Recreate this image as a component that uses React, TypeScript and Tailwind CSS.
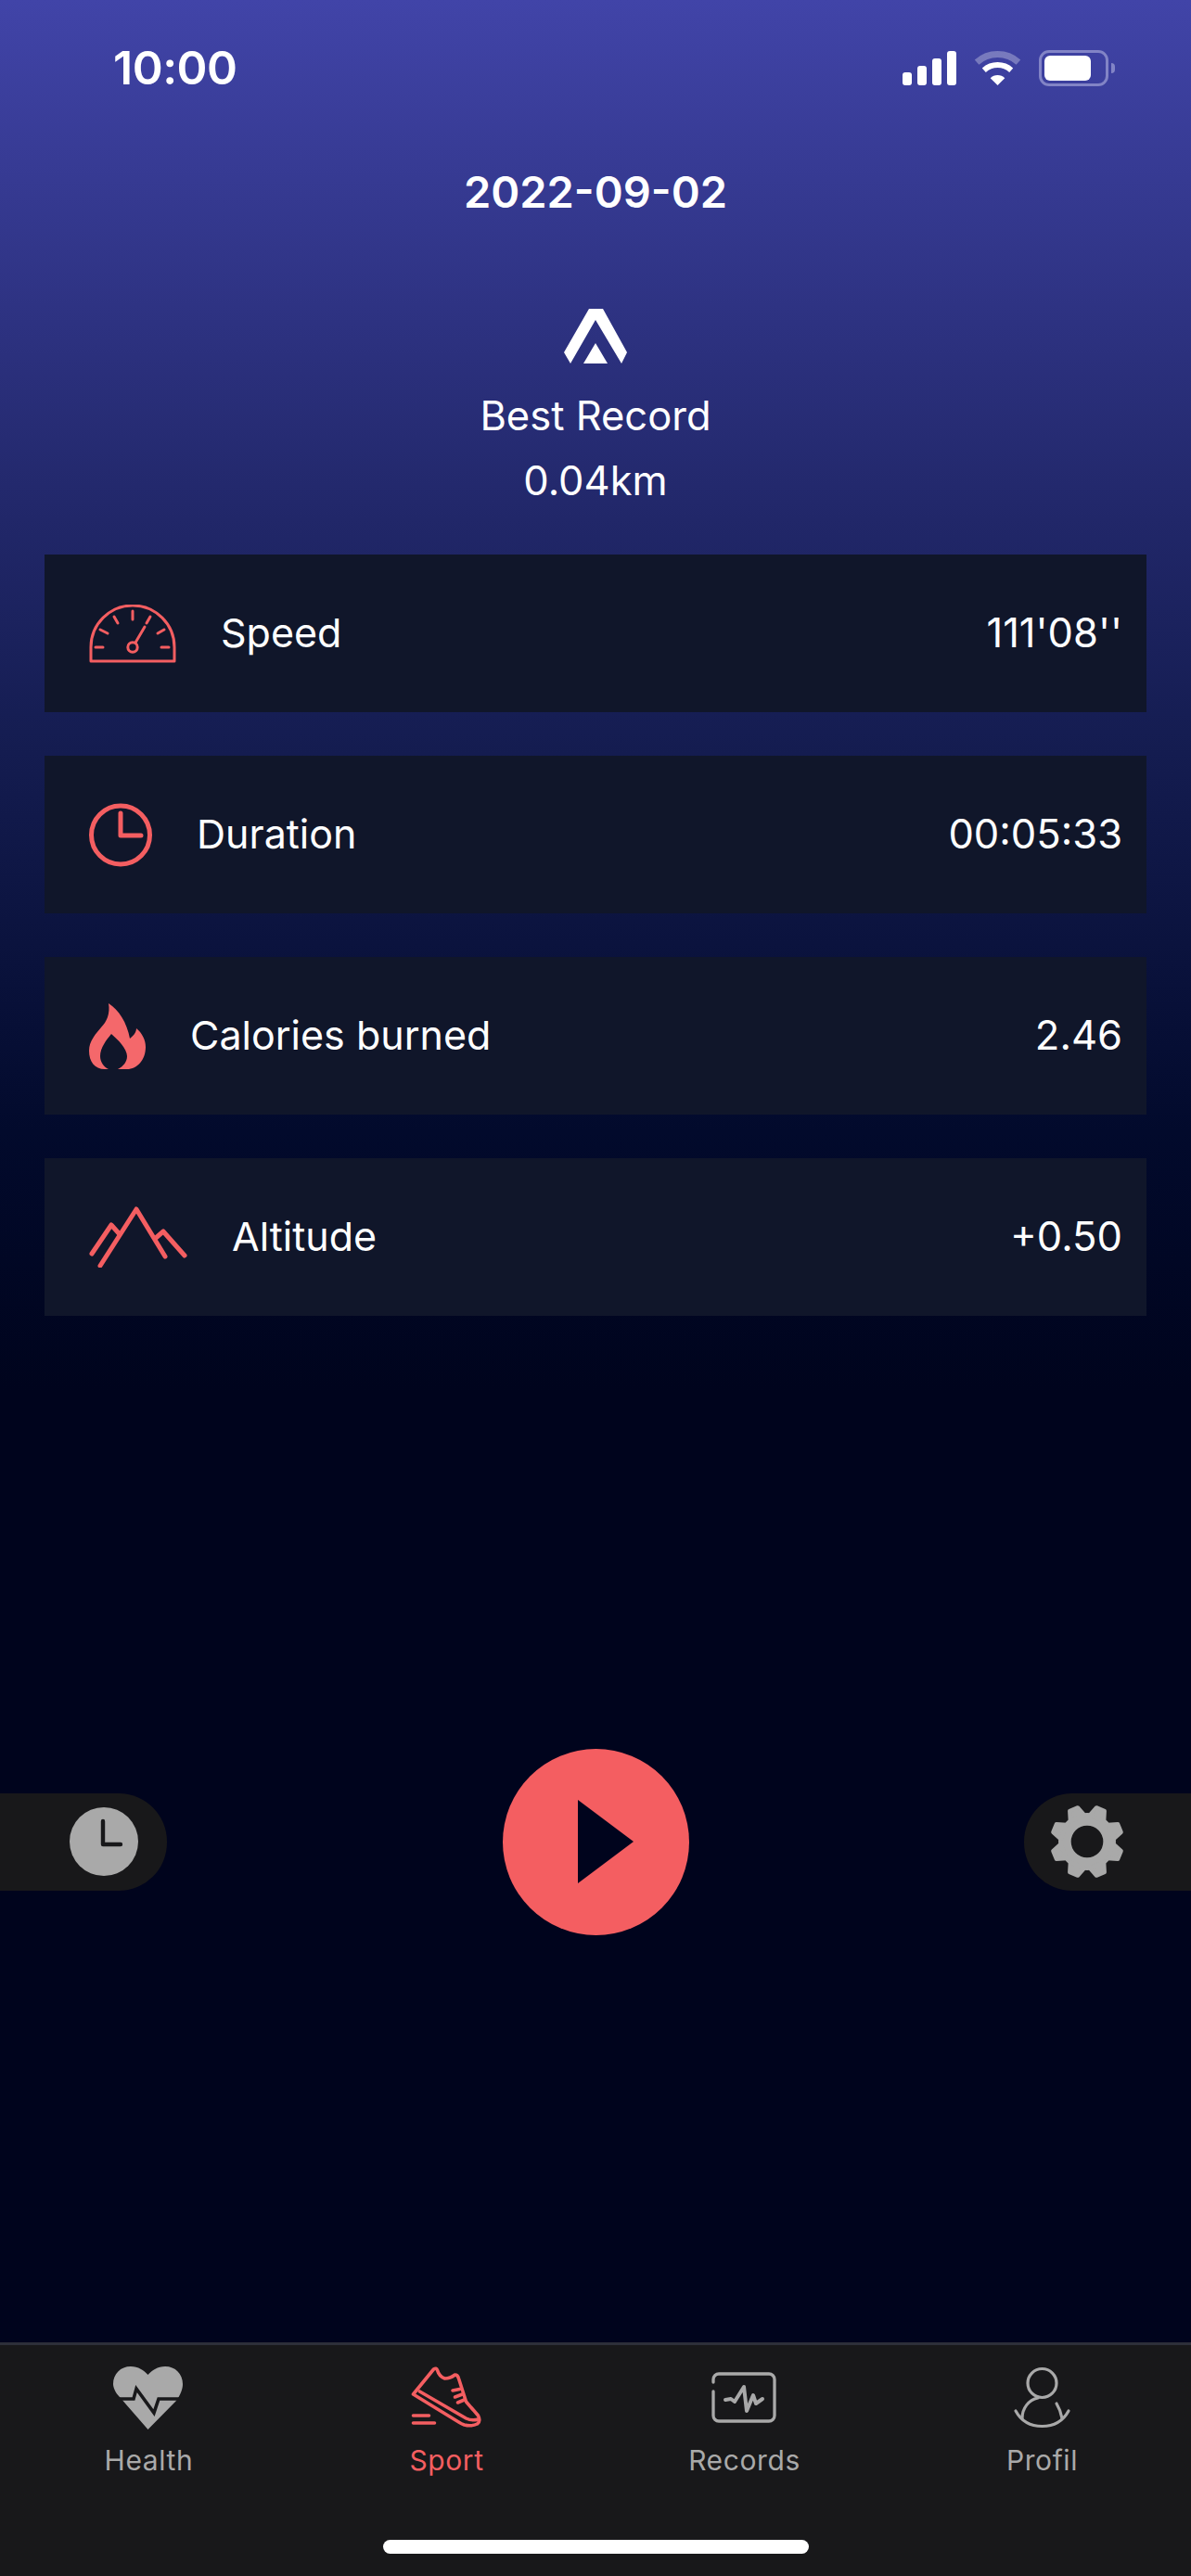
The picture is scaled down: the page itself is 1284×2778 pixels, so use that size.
import React from "react";

const coral = "#f45e61";
const gray = "#a9a9a9";

function Signal() {
  return (
    <div className="flex items-end gap-[6px] h-[37px]">
      <div className="w-[10px] h-[14px] rounded-[3px] bg-white" />
      <div className="w-[10px] h-[21px] rounded-[3px] bg-white" />
      <div className="w-[10px] h-[29px] rounded-[3px] bg-white" />
      <div className="w-[10px] h-[37px] rounded-[3px] bg-white" />
    </div>
  );
}

function Wifi() {
  return (
    <svg width="51" height="37" viewBox="0 0 51 37" fill="none">
      <path d="M3.1 12.1A33.5 33.5 0 0 1 47.9 12.1" stroke="#fff" strokeOpacity="0.3" strokeWidth="7" />
      <path d="M10.8 20.7A22 22 0 0 1 40.2 20.7" stroke="#fff" strokeWidth="6" />
      <path d="M25.5 37L17.7 29.3A11 11 0 0 1 33.3 29.3Z" fill="#fff" />
    </svg>
  );
}

function Battery() {
  return (
    <div className="flex items-center gap-[3px]">
      <div className="w-[75px] h-[39px] rounded-[11px] border-[3px] border-[#8284c6] p-[3px] pr-[16px]">
        <div className="w-full h-full rounded-[6px] bg-white" />
      </div>
      <div className="w-[4px] h-[11px] rounded-r-[4px] bg-[#8284c6]" />
    </div>
  );
}

function Logo() {
  return (
    <svg width="69" height="60" viewBox="0 0 69 60" fill="#fff">
      <path d="M27 0H42L68 47L62 59L34 12L7 59L0 47Z" />
      <path d="M34 37L47 59H21Z" />
    </svg>
  );
}

function Gauge() {
  return (
    <svg width="94" height="63" viewBox="0 0 94 63" fill="none" stroke={coral} strokeWidth="3" strokeLinecap="round" strokeLinejoin="round">
      <path d="M2 61H92V46A45 45 0 0 0 2 46Z" />
      <path d="M7 46H15M78 46H86M12 27L20 31M74 31L81 27M27 13L31 20M66 13L62 20M47 7V16M50 41L60 24" />
      <circle cx="47" cy="46" r="5.2" />
    </svg>
  );
}

function ClockLine() {
  return (
    <svg width="68" height="69" viewBox="0 0 68 69" fill="none" stroke={coral} strokeWidth="5" strokeLinecap="round" strokeLinejoin="round">
      <circle cx="34" cy="34.5" r="31.5" />
      <path d="M34 11V35H56" />
    </svg>
  );
}

function Flame() {
  return (
    <svg width="61" height="72" viewBox="0 0 61 72" fill="#f4686b">
      <path d="M21 1C32 8 41 22 44 39C48 36 51 32 51 28C57 33 61 40 61 48C61 62 52 72 41 72H31C37 69 41 64 41 58C41 50 31 40 24 34C19 40 12 49 12 58C12 64 16 70 21 72H17C6 72 0 64 0 52C0 42 7 34 13 27C19 21 23 12 21 1Z" />
    </svg>
  );
}

function Mountain() {
  return (
    <svg width="106" height="66" viewBox="0 0 106 66" fill="none" stroke={coral} strokeWidth="5" strokeLinecap="round" strokeLinejoin="round">
      <path d="M12 64L51 3L82 54" />
      <path d="M3 51L24 20L32 29" />
      <path d="M72 34L80 27L103 53" />
    </svg>
  );
}

function Heart() {
  return (
    <svg width="100" height="90" viewBox="0 0 100 90" fill="none">
      <g transform="translate(11 12)">
        <path fill={gray} d="M37.5 68L7 33C2 28 0 22 0 19C0 8 8 0 19 0C27 0 33 4 37.5 9C42 4 48 0 56 0C67 0 75 8 75 19C75 24 73 30 68 37Z" />
        <path stroke="#18181a" strokeWidth="3.6" d="M-1 35H22L25 24L44 50L49 35H76" />
      </g>
    </svg>
  );
}

function Shoe() {
  return (
    <svg width="100" height="90" viewBox="0 0 100 90" fill="none" stroke={coral} strokeWidth="3.6" strokeLinecap="round" strokeLinejoin="round">
      <g transform="translate(-1.5 0)">
        <path d="M15 42L37 15Q40 13 41 16Q43 23 49 25Q55 25 60 21Q63 21 64 25L72 50L85 65Q88 71 84 74Q78 77 70 75Q67 74 64 72Z" />
        <path d="M22 39L72 68Q78 71 85 69" />
        <path d="M57.5 38L65 36.5M60 45L68 42M63 51L70 48" />
        <path d="M15 65H32M15 73H38" />
      </g>
    </svg>
  );
}

function RecordsIcon() {
  return (
    <svg width="100" height="90" viewBox="0 0 100 90" fill="none" stroke={gray} strokeLinecap="round" strokeLinejoin="round">
      <g transform="translate(7 5)">
        <path strokeWidth="3.3" d="M9 24V21A6 6 0 0 1 15 15H69A6 6 0 0 1 75 21V60A6 6 0 0 1 69 66H15A6 6 0 0 1 9 60V34" />
        <path strokeWidth="4" d="M22 43L28 42L32 45L42 29L45 55L52 38L55 47L62 42" />
      </g>
    </svg>
  );
}

function ProfileIcon() {
  return (
    <svg width="100" height="90" viewBox="0 0 100 90" fill="none" stroke={gray} strokeWidth="3.2" strokeLinecap="round">
      <g transform="translate(6 5)">
        <circle cx="43.5" cy="25" r="15.5" />
        <path d="M39 41C29 43 22 52 22 63" />
        <path d="M15 55C21 66 31 71.5 43.5 71.5C56 71.5 66 66 72 55" />
        <path d="M59 47C62 52 64 57 65 63" />
      </g>
    </svg>
  );
}

function Gear() {
  const angles = [22.5, 67.5, 112.5, 157.5, 202.5, 247.5, 292.5, 337.5];
  return (
    <svg width="84" height="84" viewBox="-40 -40 80 80" fill="none">
      <circle r="23" stroke={gray} strokeWidth="13" />
      {angles.map((a) => (
        <path key={a} transform={`rotate(${a})`} d="M-8 -26L-4.5 -36H4.5L8 -26Z" fill={gray} stroke={gray} strokeWidth="4" strokeLinejoin="round" />
      ))}
    </svg>
  );
}

function ClockFilled() {
  return (
    <svg width="74" height="74" viewBox="0 0 74 74" fill="none">
      <circle cx="37" cy="37" r="37" fill={gray} />
      <path d="M36 15V40H55" stroke="#18181a" strokeWidth="4.4" strokeLinecap="round" strokeLinejoin="round" />
    </svg>
  );
}

function Play() {
  return (
    <div className="w-[201px] h-[201px] rounded-full bg-[#f45e61] flex items-center justify-center">
      <svg width="60" height="90" viewBox="0 0 60 90" className="ml-[22px]">
        <path d="M0 0L60 45L0 90Z" fill="#00041d" />
      </svg>
    </div>
  );
}

function Row({ icon, label, value }: { icon: React.ReactNode; label: string; value: string }) {
  return (
    <div className="h-[170px] bg-[#10162a] pl-[48px] pr-[26px] flex items-center">
      <div className="flex items-center shrink-0">{icon}</div>
      <div className="ml-[48px] mb-[3px] text-[43px] leading-[60px] text-white">{label}</div>
      <div className="ml-auto mb-[3px] text-[43.5px] leading-[60px] text-white">{value}</div>
    </div>
  );
}

function Tab({ icon, label, active }: { icon: React.ReactNode; label: string; active?: boolean }) {
  return (
    <div className="flex flex-col items-center">
      {icon}
      <div className={`mt-[3px] text-[30px] leading-[40px] tracking-[0.6px] ${active ? "text-[#f45e61]" : "text-[#a9a9a9]"}`}>{label}</div>
    </div>
  );
}

export default function App() {
  return (
    <div
      className="w-[1284px] h-[2778px] flex flex-col overflow-hidden bg-[linear-gradient(180deg,#4144a8_0px,#212769_560px,#151d52_790px,#020a2c_1220px,#00041d_1500px)]"
      style={{ fontFamily: "Inter, 'Noto Sans', sans-serif" }}
    >
      <div className="mt-[50px] h-[46px] pl-[122px] pr-[82px] flex items-center justify-between">
        <div className="text-[50px] leading-[46px] font-semibold text-white tracking-[-0.5px]">10:00</div>
        <div className="flex items-center gap-[19px]">
          <Signal />
          <Wifi />
          <Battery />
        </div>
      </div>

      <div className="mt-[81px] h-[60px] text-center text-[47px] leading-[60px] font-semibold text-white">2022-09-02</div>

      <div className="mt-[96px] flex justify-center">
        <Logo />
      </div>

      <div className="mt-[25px] text-center text-[43.5px] leading-[60px] text-white">Best Record</div>
      <div className="mt-[10px] text-center text-[43.5px] leading-[60px] text-white">0.04km</div>

      <div className="mt-[50px] mx-[48px] flex flex-col gap-[47px]">
        <Row icon={<Gauge />} label="Speed" value="111'08''" />
        <Row icon={<ClockLine />} label="Duration" value="00:05:33" />
        <Row icon={<Flame />} label="Calories burned" value="2.46" />
        <Row icon={<Mountain />} label="Altitude" value="+0.50" />
      </div>

      <div className="mt-[467px] h-[200px] flex items-center justify-between">
        <div className="w-[180px] h-[105px] rounded-r-[52px] bg-[#18181a] flex items-center pl-[75px]">
          <ClockFilled />
        </div>
        <Play />
        <div className="w-[180px] h-[105px] rounded-l-[52px] bg-[#18181a] flex items-center pl-[26px]">
          <Gear />
        </div>
      </div>

      <div className="mt-auto h-[252px] bg-[#18181a] border-t-[3px] border-[#2d2f3a] flex flex-col">
        <div className="mt-[11px] grid grid-cols-4">
          <Tab icon={<Heart />} label="Health" />
          <Tab icon={<Shoe />} label="Sport" active />
          <Tab icon={<RecordsIcon />} label="Records" />
          <Tab icon={<ProfileIcon />} label="Profil" />
        </div>
        <div className="mt-[66px] mx-auto w-[459px] h-[15px] rounded-full bg-white" />
      </div>
    </div>
  );
}
